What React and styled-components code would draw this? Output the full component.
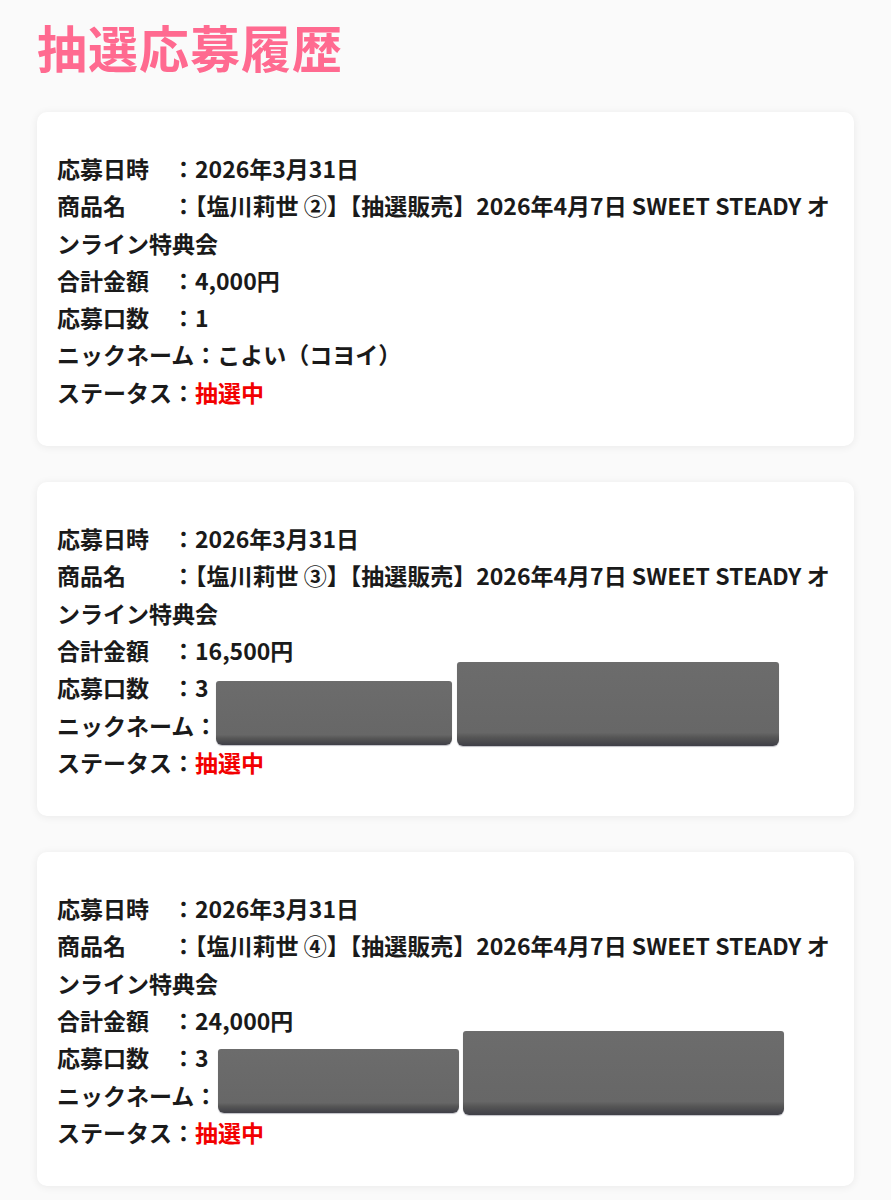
import React from "react";
import styled, { createGlobalStyle } from "styled-components";

const GlobalStyle = createGlobalStyle`
  html, body {
    margin: 0;
    padding: 0;
    background: #fafafa;
  }
  body {
    font-family: "Noto Sans CJK JP", "Noto Sans", sans-serif;
    color: #1a1a1a;
  }
`;

const entries = [
  {
    date: "2026年3月31日",
    item: "【塩川莉世 ②】【抽選販売】2026年4月7日 SWEET STEADY オンライン特典会",
    total: "4,000円",
    count: "1",
    nick: "こよい（コヨイ）",
    status: "抽選中",
    masked: false,
  },
  {
    date: "2026年3月31日",
    item: "【塩川莉世 ③】【抽選販売】2026年4月7日 SWEET STEADY オンライン特典会",
    total: "16,500円",
    count: "3",
    nick: "",
    status: "抽選中",
    masked: [
      { left: 179, top: 199, width: 236, height: 64 },
      { left: 420, top: 180, width: 322, height: 84 },
    ],
  },
  {
    date: "2026年3月31日",
    item: "【塩川莉世 ④】【抽選販売】2026年4月7日 SWEET STEADY オンライン特典会",
    total: "24,000円",
    count: "3",
    nick: "",
    status: "抽選中",
    masked: [
      { left: 181, top: 197, width: 241, height: 64 },
      { left: 426, top: 179, width: 321, height: 84 },
    ],
  },
];

const App = () => {
  return (
    <>
      <GlobalStyle />
      <Page>
        <Title>抽選応募履歴</Title>
        <List>
          {entries.map((e, i) => (
            <Card key={i}>
              <Line>応募日時　：{e.date}</Line>
              <Line>商品名　　：{e.item}</Line>
              <Line>合計金額　：{e.total}</Line>
              <Line>応募口数　：{e.count}</Line>
              <Line>ニックネーム：{e.nick}</Line>
              <Line>
                ステータス：<Status>{e.status}</Status>
              </Line>
              {e.masked &&
                e.masked.map((m, j) => (
                  <Mask
                    key={j}
                    style={{ left: m.left, top: m.top, width: m.width, height: m.height }}
                  />
                ))}
            </Card>
          ))}
        </List>
      </Page>
    </>
  );
};

const Page = styled.div`
  padding: 12px 37px 20px 37px;
`;

const Title = styled.h1`
  margin: 0 0 32px 0;
  font-size: 50px;
  line-height: 68px;
  font-weight: 700;
  color: #ff6a90;
  letter-spacing: 1px;
`;

const List = styled.div`
  display: flex;
  flex-direction: column;
  gap: 36px;
`;

const Card = styled.div`
  position: relative;
  background: #ffffff;
  border-radius: 10px;
  box-shadow: 0 1px 8px rgba(0, 0, 0, 0.07);
  padding: 38px 18px 35px 20px;
`;

const Line = styled.p`
  margin: 0;
  font-size: 23px;
  line-height: 37.3px;
  font-weight: 700;
  color: #1a1a1a;
`;

const Status = styled.span`
  color: #f20000;
`;

const Mask = styled.div`
  position: absolute;
  border-radius: 3px 3px 6px 6px;
  background: linear-gradient(
    to bottom,
    #6c6c6c 0%,
    #676767 84%,
    #555555 90%,
    #3f3f47 100%
  );
  box-shadow: 0 1px 1px rgba(40, 40, 60, 0.3);
`;

export default App;
